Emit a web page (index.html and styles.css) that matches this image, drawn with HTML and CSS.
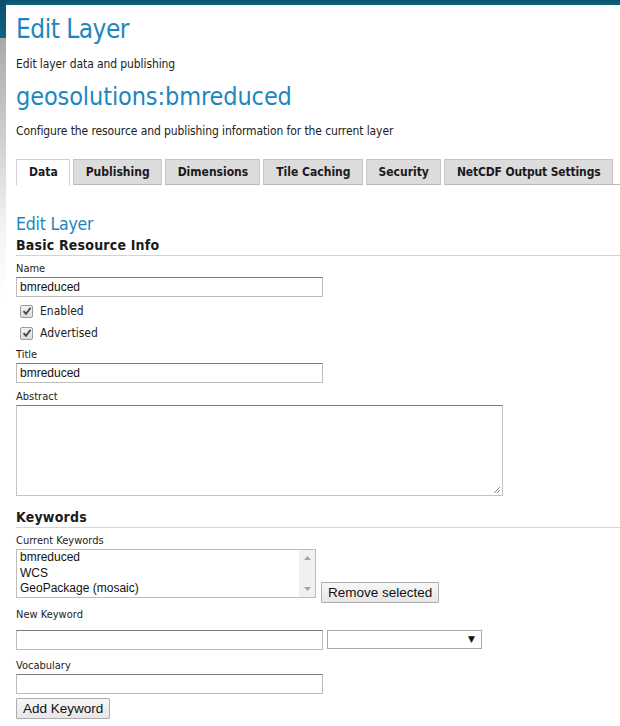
FILE: index.html
```html
<!DOCTYPE html>
<html>
<head>
<meta charset="utf-8">
<link rel="stylesheet" href="styles.css">
</head>
<body>
<div class="page">
  <div class="rail"></div>
  <div class="panel">
    <h1 class="title">Edit Layer</h1>
    <p class="desc first">Edit layer data and publishing</p>
    <h1 class="title layer">geosolutions:bmreduced</h1>
    <p class="desc">Configure the resource and publishing information for the current layer</p>

    <div class="tabs">
      <div class="tab active">Data</div>
      <div class="tab">Publishing</div>
      <div class="tab">Dimensions</div>
      <div class="tab">Tile Caching</div>
      <div class="tab">Security</div>
      <div class="tab last">NetCDF Output Settings</div>
      <div class="tab-fill"></div>
    </div>

    <h2 class="sub">Edit Layer</h2>
    <h3 class="section">Basic Resource Info</h3>

    <label class="lbl nm">Name</label>
    <div class="input">bmreduced</div>
    <div class="check"><span class="box"><svg width="10" height="10" viewBox="0 0 10 10"><path d="M1.5 5.2 L4 7.8 L8.6 1.8" fill="none" stroke="#444" stroke-width="1.8"/></svg></span>Enabled</div>
    <div class="check"><span class="box"><svg width="10" height="10" viewBox="0 0 10 10"><path d="M1.5 5.2 L4 7.8 L8.6 1.8" fill="none" stroke="#444" stroke-width="1.8"/></svg></span>Advertised</div>
    <label class="lbl t">Title</label>
    <div class="input">bmreduced</div>
    <label class="lbl">Abstract</label>
    <div class="textarea"><svg class="grip" width="9" height="9" viewBox="0 0 9 9"><path d="M8 2 L2 8 M8 5 L5 8" stroke="#888" stroke-width="1"/></svg></div>

    <h3 class="section kw">Keywords</h3>
    <label class="lbl ck">Current Keywords</label>
    <div class="kwrow">
      <div class="list">
        <div class="items">
          <div>bmreduced</div>
          <div>WCS</div>
          <div>GeoPackage (mosaic)</div>
        </div>
        <div class="scroll">
          <svg width="7" height="4" viewBox="0 0 7 4"><path d="M0 4 L3.5 0 L7 4 Z" fill="#a3a3a3"/></svg>
          <svg width="7" height="4" viewBox="0 0 7 4"><path d="M0 0 L3.5 4 L7 0 Z" fill="#a3a3a3"/></svg>
        </div>
      </div>
      <div class="btn">Remove selected</div>
    </div>
    <label class="lbl nk">New Keyword</label>
    <div class="newrow">
      <div class="input"></div>
      <div class="dropdown"><span class="arrow">▼</span></div>
    </div>
    <label class="lbl voc">Vocabulary</label>
    <div class="input v"></div>
    <div class="btn add">Add Keyword</div>
  </div>
</div>
</body>
</html>
```
FILE: styles.css
```css
* { box-sizing: border-box; }
html, body { margin: 0; padding: 0; }
body {
  background: #ffffff;
  width: 620px;
  height: 726px;
  overflow: hidden;
  font-family: "DejaVu Sans Condensed", "DejaVu Sans", sans-serif;
  color: #1a1a1a;
}
.page {
  display: flex;
  background: linear-gradient(to bottom, #0a4f69 0, #0e6482 5px, #ffffff 5px);
  min-height: 726px;
}
.rail {
  width: 6px;
  flex: none;
  background: linear-gradient(to bottom, #0a4f69 0, #0e6482 38px, #a9a9a9 38px, #d4d4d4 150px, #f4f4f4 230px, #ffffff 300px);
}
.panel {
  flex: 1;
  margin-top: 5px;
  background: #fff;
  border-top-left-radius: 9px;
  padding: 7px 0 0 10px;
}
.title {
  margin: 0;
  font-weight: normal;
  font-size: 26px;
  line-height: 34px;
  color: #1d86c0;
  letter-spacing: -0.5px;
}
.title.layer {
  font-size: 25px;
  line-height: 32px;
  margin-top: 10px;
  letter-spacing: -0.1px;
}
.desc {
  margin: 0;
  font-size: 12px;
  line-height: 14px;
  margin-top: 11px;
  color: #222;
  letter-spacing: -0.1px;
}
.desc.first { margin-top: 11px; }
.tabs {
  display: flex;
  margin-top: 21px;
  height: 26px;
  align-items: flex-end;
}
.tab {
  flex: none;
  white-space: nowrap;
  height: 26px;
  padding: 0 11px 0 12px;
  margin-right: 3px;
  background: #dcdcdc;
  border: 1px solid #c4c4c4;
  border-bottom: 1px solid #b8b8b8;
  font-size: 12px;
  font-weight: bold;
  line-height: 25px;
  color: #1a1a1a;
}
.tab.last { letter-spacing: -0.15px; padding: 0 11px 0 12px; }
.tab.active {
  background: #fff;
  border-color: #d0d0d0;
  border-bottom-color: #fff;
  height: 27px;
  margin-bottom: -1px;
}
.tab-fill {
  flex: 1;
  height: 1px;
  background: #b8b8b8;
  margin-left: -3px;
}
.sub {
  margin: 27px 0 0 0;
  font-size: 17.5px;
  line-height: 25px;
  font-weight: normal;
  color: #1d86c0;
  letter-spacing: -0.2px;
}
.section {
  margin: 0;
  font-size: 14px;
  line-height: 17px;
  font-weight: bold;
  color: #1a1a1a;
  border-bottom: 1px solid #c8dfa8;
  padding-bottom: 1px;
  letter-spacing: 0.2px;
}
.section.kw {
  margin-top: 13px;
  border-bottom-color: #d2dcc4;
}
.lbl {
  display: block;
  font-size: 11px;
  line-height: 14px;
  margin-top: 7px;
  color: #222;
}
.lbl.nm { margin-top: 6px; }
.lbl.t { margin-top: 8px; }
.lbl.ck { margin-top: 6px; }
.input {
  width: 307px;
  height: 20px;
  border: 1px solid #bdbdbd;
  border-top-color: #7a7a7a;
  margin-top: 1px;
  font-family: "Liberation Sans", Arial, sans-serif;
  font-size: 12px;
  line-height: 18px;
  padding-left: 3px;
  color: #111;
}
.input.v { margin-top: 1px; }
.check {
  display: flex;
  align-items: center;
  height: 14px;
  margin-top: 7px;
  margin-left: 4px;
  font-size: 12px;
  color: #222;
}
.check + .check { margin-top: 8px; }
.box {
  width: 13px;
  height: 13px;
  border: 1px solid #9a9a9a;
  border-radius: 2px;
  background: linear-gradient(#f2f2f2, #dedede);
  display: flex;
  align-items: center;
  justify-content: center;
  margin-right: 7px;
}
.textarea {
  position: relative;
  width: 487px;
  height: 91px;
  margin-top: 1px;
  border: 1px solid #c4c4c4;
  border-top-color: #7a7a7a;
}
.grip {
  position: absolute;
  right: 1px;
  bottom: 1px;
}
.kwrow {
  display: flex;
  align-items: flex-end;
  margin-top: 1px;
}
.list {
  width: 300px;
  height: 49px;
  border: 1px solid #bdbdbd;
  display: flex;
}
.items {
  flex: 1;
  padding: 0 0 0 3px;
  font-family: "Liberation Sans", Arial, sans-serif;
  font-size: 12px;
  line-height: 15.5px;
  color: #111;
}
.scroll {
  width: 16px;
  background: #f0f0f0;
  display: flex;
  flex-direction: column;
  justify-content: space-between;
  align-items: center;
  padding: 6px 0 6px;
}
.btn {
  flex: none;
  height: 21px;
  padding: 0 6px;
  border: 1px solid #acacac;
  border-radius: 1px;
  background: linear-gradient(#f7f7f7, #e7e7e7);
  font-family: "Liberation Sans", Arial, sans-serif;
  font-size: 13.5px;
  line-height: 19px;
  color: #111;
  margin-left: 5px;
  margin-bottom: -5px;
}
.btn.add {
  display: inline-block;
  margin: 4px 0 0 0;
}
.lbl.nk { margin-top: 10px; }
.lbl.voc { margin-top: 9px; }
.newrow {
  display: flex;
  align-items: flex-start;
  margin-top: 6px;
}
.newrow .input { margin-top: 2px; }
.dropdown {
  width: 155px;
  height: 19px;
  margin-left: 4px;
  margin-top: 2px;
  border: 1px solid #a9a9a9;
  position: relative;
}
.arrow {
  position: absolute;
  right: 6px;
  top: 2px;
  font-size: 9px;
  line-height: 13px;
  color: #111;
  font-family: "DejaVu Sans", sans-serif;
}
```
